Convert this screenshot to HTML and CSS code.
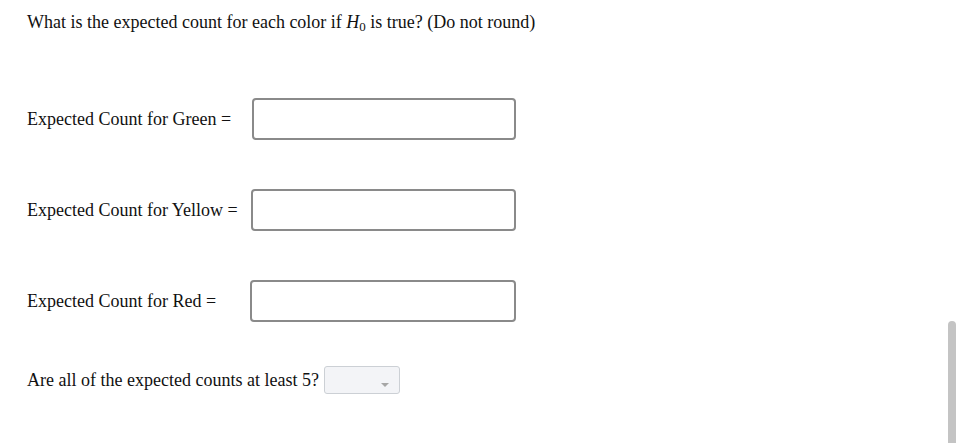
FILE: index.html
```html
<!DOCTYPE html>
<html lang="en">
<head>
  <meta charset="UTF-8">
  <title>Expected counts</title>
  <link rel="stylesheet" href="styles.css">
</head>
<body>
  <div class="question">
    <p class="prompt">What is the expected count for each color if <i>H</i><sub>0</sub> is true? (Do not round)</p>

    <div class="row">
      <label class="label green">Expected Count for Green =</label>
      <input class="answer" type="text">
    </div>
    <div class="row">
      <label class="label yellow">Expected Count for Yellow =</label>
      <input class="answer" type="text">
    </div>
    <div class="row">
      <label class="label red">Expected Count for Red =</label>
      <input class="answer" type="text">
    </div>

    <div class="check">
      <span>Are all of the expected counts at least 5?</span>
      <div class="select"><span class="caret"></span></div>
    </div>
  </div>
  <div class="scroll-thumb"></div>
</body>
</html>
```

FILE: styles.css
```css
body {
  margin: 0;
  padding: 11px 27px;
  font-family: 'Liberation Serif', 'Times New Roman', serif;
  font-size: 18px;
  color: #111;
  background: #fff;
}
.prompt {
  margin: 0 0 65px;
  line-height: 22px;
}
.prompt sub {
  font-size: 13px;
  vertical-align: -3px;
  line-height: 0;
}
.row {
  display: flex;
  align-items: center;
  height: 42px;
  margin-bottom: 49px;
}
.label {
  white-space: nowrap;
}
.green { width: 225px; }
.yellow { width: 224px; }
.red { width: 223px; }
.answer {
  width: 265px;
  height: 42px;
  box-sizing: border-box;
  border: 2px solid #8a8a8a;
  border-radius: 4px;
  background: #fff;
  margin: 0;
}
.red + .answer { width: 266px; }
.green + .answer { width: 264px; }
.check {
  display: flex;
  align-items: center;
  gap: 5px;
  margin-top: -5px;
}
.select {
  width: 76px;
  height: 28px;
  box-sizing: border-box;
  border: 1px solid #ccd0d5;
  border-radius: 3px;
  background: #f3f4f7;
  position: relative;
}
.caret {
  position: absolute;
  right: 10px;
  top: 16px;
  border-left: 4px solid transparent;
  border-right: 4px solid transparent;
  border-top: 4px solid #a6a6a6;
}
.scroll-thumb {
  position: fixed;
  right: 2px;
  top: 321px;
  width: 8px;
  height: 130px;
  border-radius: 4px;
  background: #c4c4c4;
}
```
